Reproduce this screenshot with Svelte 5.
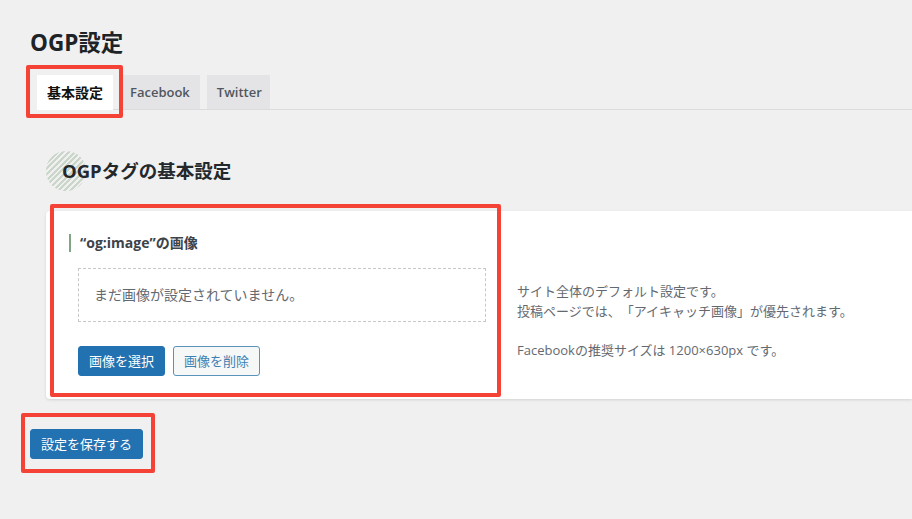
<script>
  const tabs = ["基本設定", "Facebook", "Twitter"];
  let active = $state(0);
</script>

<div class="page">
  <h1>OGP設定</h1>

  <div class="tabs">
    {#each tabs as tab, i}
      <button class="tab" class:active={active === i} onclick={() => (active = i)}>{tab}</button>
    {/each}
    <span class="mark mark-tab"></span>
  </div>

  <h2><span>OGPタグの基本設定</span></h2>

  <div class="card">
    <div class="field">
      <h3>“og:image”の画像</h3>
      <div class="preview">まだ画像が設定されていません。</div>
      <div class="actions">
        <button class="btn primary">画像を選択</button>
        <button class="btn outline">画像を削除</button>
      </div>
    </div>
    <div class="desc">
      <p>サイト全体のデフォルト設定です。<br />投稿ページでは、「アイキャッチ画像」が優先されます。</p>
      <p>Facebookの推奨サイズは 1200×630px です。</p>
    </div>
    <span class="mark mark-field"></span>
  </div>

  <div class="save">
    <button class="btn primary">設定を保存する</button>
    <span class="mark mark-save"></span>
  </div>
</div>

<style>
  :global(body) {
    margin: 0;
    background: #f0f0f1;
  }

  .page {
    height: 519px;
    box-sizing: border-box;
    padding: 31px 0 0 30px;
    overflow: hidden;
    font-family: "Open Sans", "Noto Sans CJK JP", sans-serif;
    color: #3c434a;
    text-spacing-trim: space-all;
  }

  h1 {
    margin: 0;
    font-size: 22.5px;
    line-height: 24px;
    font-weight: 700;
    color: #1d2327;
  }

  .tabs {
    position: relative;
    display: flex;
    gap: 7px;
    margin: 20px 0 0 7px;
    height: 34px;
    border-bottom: 1px solid #dcdcde;
  }

  .tab {
    height: 34px;
    padding: 0 10px;
    border: none;
    background: #e4e4e6;
    font: 600 13px/34px "Open Sans", "Noto Sans CJK JP", sans-serif;
    color: #50575e;
  }

  .tab:nth-child(3) {
    padding-right: 8px;
  }

  .tab.active {
    width: 76px;
    height: 35px;
    padding: 0;
    background: #fff;
    color: #111;
    font-size: 14px;
    font-weight: 700;
  }

  h2 {
    margin: 41px 0 0 16px;
    height: 40px;
    width: 40px;
    border-radius: 50%;
    background: repeating-linear-gradient(135deg, #c9d6c9 0 2px, #f0f0f1 2px 4px);
    font-size: 18.5px;
    line-height: 40px;
    font-weight: 700;
    white-space: nowrap;
    color: #23282d;
  }

  h2 span {
    margin-left: 16px;
  }

  .card {
    position: relative;
    display: flex;
    margin: 20px 0 0 16px;
    height: 188px;
    background: #fff;
    border-radius: 4px 0 0 4px;
    box-shadow: 0 1px 3px rgba(0, 0, 0, 0.12);
  }

  .field {
    width: 440px;
    box-sizing: border-box;
    padding: 23px 0 0 24px;
  }

  h3 {
    margin: 0 0 0 -1px;
    padding-left: 9px;
    border-left: 2px solid #7fa585;
    font-size: 14px;
    line-height: 18px;
    font-weight: 700;
    color: #3c434a;
  }

  .preview {
    box-sizing: border-box;
    width: 408px;
    height: 54px;
    margin: 16px 0 0 8px;
    padding-left: 15px;
    border: 1px dashed #c8c8c8;
    font-size: 14px;
    line-height: 52px;
    color: #646970;
  }

  .actions {
    display: flex;
    gap: 8px;
    margin: 24px 0 0 8px;
  }

  .btn {
    height: 30px;
    padding: 0 10px;
    border-radius: 3px;
    font: 400 13px/28px "Open Sans", "Noto Sans CJK JP", sans-serif;
  }

  .primary {
    background: #2271b1;
    border: 1px solid #2271b1;
    color: #fff;
  }

  .outline {
    background: #f6f7f7;
    border: 1px solid #5a93b9;
    color: #3d81b3;
  }

  .desc {
    padding: 70px 0 0 31px;
    font-size: 13px;
    line-height: 20px;
    color: #646970;
  }

  .desc p {
    margin: 0 0 19px;
  }

  .save {
    position: relative;
    margin-top: 30px;
  }

  .save .btn {
    width: 113px;
    padding: 0;
  }

  /* red annotation boxes drawn over the screenshot */
  .mark {
    position: absolute;
    box-sizing: border-box;
    border: 4px solid #f44336;
    border-radius: 2px;
    pointer-events: none;
  }

  .mark-tab {
    left: -11px;
    top: -10px;
    width: 97px;
    height: 53px;
  }

  .mark-field {
    left: 4px;
    top: -7px;
    width: 451px;
    height: 193px;
  }

  .mark-save {
    left: -9px;
    top: -16px;
    width: 134px;
    height: 60px;
  }
</style>
